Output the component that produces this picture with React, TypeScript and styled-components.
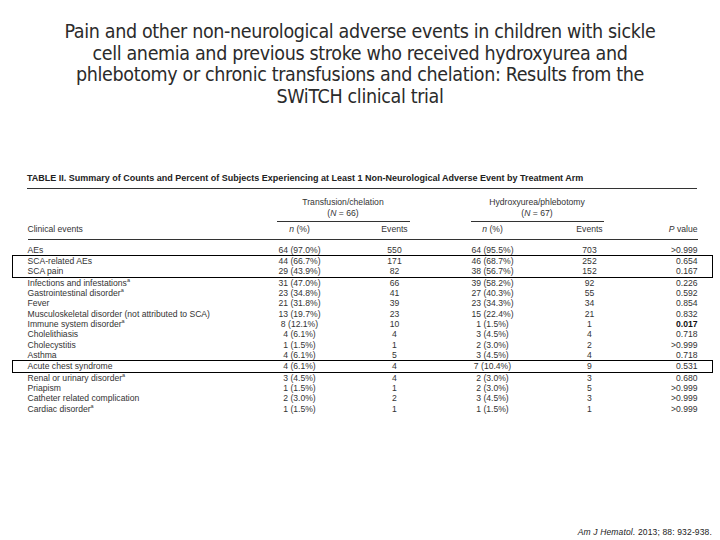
import React, { FC } from 'react';
import styled, { createGlobalStyle } from 'styled-components';

const GlobalStyle = createGlobalStyle`
  html, body {
    margin: 0;
    padding: 0;
    background: #ffffff;
  }
`;

type Row = {
  label: string;
  note?: boolean;
  tfN: string;
  tfEvents: string;
  huN: string;
  huEvents: string;
  p: string;
  strong?: boolean;
};

const ROWS: Row[] = [
  { label: 'AEs', tfN: '64 (97.0%)', tfEvents: '550', huN: '64 (95.5%)', huEvents: '703', p: '>0.999' },
  { label: 'SCA-related AEs', tfN: '44 (66.7%)', tfEvents: '171', huN: '46 (68.7%)', huEvents: '252', p: '0.654' },
  { label: 'SCA pain', tfN: '29 (43.9%)', tfEvents: '82', huN: '38 (56.7%)', huEvents: '152', p: '0.167' },
  { label: 'Infections and infestations', note: true, tfN: '31 (47.0%)', tfEvents: '66', huN: '39 (58.2%)', huEvents: '92', p: '0.226' },
  { label: 'Gastrointestinal disorder', note: true, tfN: '23 (34.8%)', tfEvents: '41', huN: '27 (40.3%)', huEvents: '55', p: '0.592' },
  { label: 'Fever', tfN: '21 (31.8%)', tfEvents: '39', huN: '23 (34.3%)', huEvents: '34', p: '0.854' },
  { label: 'Musculoskeletal disorder (not attributed to SCA)', tfN: '13 (19.7%)', tfEvents: '23', huN: '15 (22.4%)', huEvents: '21', p: '0.832' },
  { label: 'Immune system disorder', note: true, tfN: '8 (12.1%)', tfEvents: '10', huN: '1 (1.5%)', huEvents: '1', p: '0.017', strong: true },
  { label: 'Cholelithiasis', tfN: '4 (6.1%)', tfEvents: '4', huN: '3 (4.5%)', huEvents: '4', p: '0.718' },
  { label: 'Cholecystitis', tfN: '1 (1.5%)', tfEvents: '1', huN: '2 (3.0%)', huEvents: '2', p: '>0.999' },
  { label: 'Asthma', tfN: '4 (6.1%)', tfEvents: '5', huN: '3 (4.5%)', huEvents: '4', p: '0.718' },
  { label: 'Acute chest syndrome', tfN: '4 (6.1%)', tfEvents: '4', huN: '7 (10.4%)', huEvents: '9', p: '0.531' },
  { label: 'Renal or urinary disorder', note: true, tfN: '3 (4.5%)', tfEvents: '4', huN: '2 (3.0%)', huEvents: '3', p: '0.680' },
  { label: 'Priapism', tfN: '1 (1.5%)', tfEvents: '1', huN: '2 (3.0%)', huEvents: '5', p: '>0.999' },
  { label: 'Catheter related complication', tfN: '2 (3.0%)', tfEvents: '2', huN: '3 (4.5%)', huEvents: '3', p: '>0.999' },
  { label: 'Cardiac disorder', note: true, tfN: '1 (1.5%)', tfEvents: '1', huN: '1 (1.5%)', huEvents: '1', p: '>0.999' },
];

// groups of rows; the boxed ones carry the hand-drawn frame of the slide
const GROUPS: { boxed: boolean; rows: Row[] }[] = [
  { boxed: false, rows: ROWS.slice(0, 1) },
  { boxed: true, rows: ROWS.slice(1, 3) },
  { boxed: false, rows: ROWS.slice(3, 11) },
  { boxed: true, rows: ROWS.slice(11, 12) },
  { boxed: false, rows: ROWS.slice(12) },
];

const Slide = styled.div`
  width: 720px;
  height: 540px;
  display: flex;
  flex-direction: column;
  overflow: hidden;
  background: #ffffff;
  font-family: 'Liberation Sans', Arial, sans-serif;
  color: #2a2a2a;
`;

const Title = styled.h1`
  margin: 21px 0 0;
  text-align: center;
  font-family: 'DejaVu Sans Condensed', 'Liberation Sans Narrow', 'Liberation Sans', sans-serif;
  font-stretch: condensed;
  font-weight: 400;
  font-size: 19.5px;
  line-height: 21.5px;
  letter-spacing: -0.35px;
  color: #2b2b2b;
`;

const TableBlock = styled.section`
  margin: 66px 8px 0 12px;
  width: 700px;
`;

const Caption = styled.div`
  margin: 0 15px;
  padding-bottom: 5px;
  border-bottom: 1px solid #333;
  font-size: 9px;
  line-height: 10px;
  font-weight: 700;
  color: #222;
  white-space: nowrap;
`;

const Table = styled.table`
  width: 700px;
  border-collapse: collapse;
  table-layout: fixed;
  font-size: 8.6px;
  color: #333;
`;

const Body = styled.tbody<{ $boxed?: boolean }>`
  border: ${(p) => (p.$boxed ? '1.5px solid #000' : 'none')};
`;

const Cell = styled.td<{ $align?: 'left' | 'center' | 'right'; $edge?: boolean; $strong?: boolean }>`
  padding: 0;
  line-height: 10.35px;
  height: 10.35px;
  white-space: nowrap;
  text-align: ${(p) => p.$align || 'center'};
  font-weight: ${(p) => (p.$strong ? 700 : 400)};
  color: ${(p) => (p.$strong ? '#111' : 'inherit')};
`;

const HeadCell = styled.th<{ $align?: 'left' | 'center' | 'right'; $rule?: boolean }>`
  padding: 2.5px 0 4px;
  line-height: 11px;
  font-weight: 400;
  white-space: nowrap;
  vertical-align: bottom;
  text-align: ${(p) => p.$align || 'center'};
  border-bottom: ${(p) => (p.$rule ? '1px solid #333' : 'none')};
`;

const GroupCell = styled.th`
  padding: 7.5px 0 0;
  font-weight: 400;
  vertical-align: bottom;
`;

const GroupLabel = styled.div<{ $left: number; $right: number }>`
  margin: 0 ${(p) => p.$right}px 0 ${(p) => p.$left}px;
  padding-bottom: 2px;
  border-bottom: 1px solid #333;
  line-height: 11px;
  text-align: center;
  white-space: nowrap;
`;

const Sup = styled.sup`
  font-size: 5.5px;
  line-height: 0;
  vertical-align: 4px;
`;

const Cite = styled.div`
  margin-top: auto;
  align-self: flex-end;
  padding: 0 8px 3px 0;
  font-size: 8.5px;
  line-height: 10px;
  letter-spacing: 0.15px;
  color: #222;
`;

const Spacer = styled.tr`
  height: 5px;
`;

const DataRow: FC<{ row: Row }> = ({ row }) => (
  <tr>
    <Cell $edge />
    <Cell $align="left">
      {row.label}
      {row.note ? <Sup>a</Sup> : null}
    </Cell>
    <Cell>{row.tfN}</Cell>
    <Cell>{row.tfEvents}</Cell>
    <Cell>{row.huN}</Cell>
    <Cell>{row.huEvents}</Cell>
    <Cell $align="right" $strong={row.strong}>
      {row.p}
    </Cell>
    <Cell $edge />
  </tr>
);

const App: FC = () => {
  return (
    <Slide>
      <GlobalStyle />
      <Title>
        Pain and other non-neurological adverse events in children with sickle
        <br />
        cell anemia and previous stroke who received hydroxyurea and
        <br />
        phlebotomy or chronic transfusions and chelation: Results from the
        <br />
        SWiTCH clinical trial
      </Title>

      <TableBlock>
        <Caption>
          TABLE II. Summary of Counts and Percent of Subjects Experiencing at Least 1 Non-Neurological Adverse
          Event by Treatment Arm
        </Caption>
        <Table>
          <colgroup>
            <col style={{ width: 15 }} />
            <col style={{ width: 223 }} />
            <col style={{ width: 98 }} />
            <col style={{ width: 92 }} />
            <col style={{ width: 104 }} />
            <col style={{ width: 90 }} />
            <col style={{ width: 63 }} />
            <col style={{ width: 15 }} />
          </colgroup>
          <thead>
            <tr>
              <GroupCell />
              <GroupCell />
              <GroupCell colSpan={2}>
                <GroupLabel $left={26} $right={31}>
                  Transfusion/chelation
                  <br />(<i>N</i> = 66)
                </GroupLabel>
              </GroupCell>
              <GroupCell colSpan={2}>
                <GroupLabel $left={30} $right={31}>
                  Hydroxyurea/phlebotomy
                  <br />(<i>N</i> = 67)
                </GroupLabel>
              </GroupCell>
              <GroupCell />
              <GroupCell />
            </tr>
            <tr>
              <HeadCell />
              <HeadCell $align="left" $rule>
                Clinical events
              </HeadCell>
              <HeadCell $rule>
                <i>n</i> (%)
              </HeadCell>
              <HeadCell $rule>Events</HeadCell>
              <HeadCell $rule>
                <i>n</i> (%)
              </HeadCell>
              <HeadCell $rule>Events</HeadCell>
              <HeadCell $align="right" $rule>
                <i>P</i> value
              </HeadCell>
              <HeadCell />
            </tr>
          </thead>
          {GROUPS.map((group, gi) => (
            <Body key={gi} $boxed={group.boxed}>
              {gi === 0 ? <Spacer /> : null}
              {group.rows.map((row) => (
                <DataRow key={row.label} row={row} />
              ))}
            </Body>
          ))}
        </Table>
      </TableBlock>

      <Cite>
        <i>Am J Hematol.</i> 2013; 88: 932-938.
      </Cite>
    </Slide>
  );
};

export default App;
